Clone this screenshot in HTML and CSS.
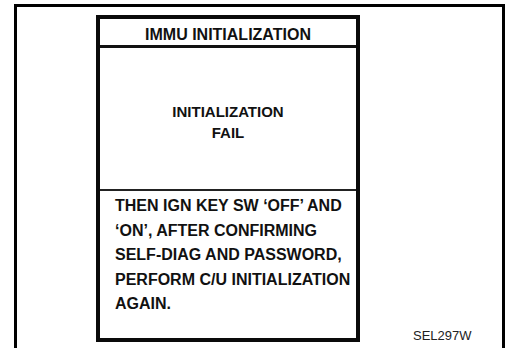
FILE: index.html
```html
<!DOCTYPE html>
<html lang="en">
<head>
  <meta charset="UTF-8">
  <meta name="viewport" content="width=device-width, initial-scale=1.0">
  <title>IMMU Initialization</title>
  <link rel="stylesheet" href="styles.css">
</head>
<body>
  <div class="frame">
    <div class="screen">
      <div class="screen-title">IMMU INITIALIZATION</div>
      <div class="screen-status">
        INITIALIZATION<br>
        FAIL
      </div>
      <div class="screen-note">
        THEN IGN KEY SW ‘OFF’ AND<br>
        ‘ON’, AFTER CONFIRMING<br>
        SELF-DIAG AND PASSWORD,<br>
        PERFORM C/U INITIALIZATION<br>
        AGAIN.
      </div>
    </div>
    <div class="fig-code">SEL297W</div>
  </div>
</body>
</html>
```

FILE: styles.css
```css
body {
  margin: 0;
  background: white;
  color: #111;
  font-family: "Liberation Sans", Arial, sans-serif;
  overflow: hidden;
}
.frame {
  display: flex;
  margin: 4px 0 0 14px;
  height: 344px;
  box-sizing: border-box;
  border: 3px solid black;
  border-bottom: none;
}
.screen {
  margin: 8px 0 0 79px;
  width: 264px;
  height: 327px;
  box-sizing: border-box;
  border: 4px solid #0a0a0a;
  display: flex;
  flex-direction: column;
  font-weight: bold;
}
.screen-title {
  height: 29px;
  box-sizing: border-box;
  padding-top: 6px;
  line-height: 20px;
  font-size: 16px;
  text-align: center;
  border-bottom: 3px solid #111;
}
.screen-status {
  height: 143px;
  box-sizing: border-box;
  padding-top: 53px;
  font-size: 15px;
  line-height: 21px;
  text-align: center;
  border-bottom: 2px solid #222;
}
.screen-note {
  padding: 3px 0 0 15px;
  font-size: 16px;
  line-height: 24.5px;
  white-space: nowrap;
}
.fig-code {
  align-self: flex-end;
  margin: 0 0 5px 53px;
  font-size: 13px;
  line-height: 15px;
  color: #222;
}
```
